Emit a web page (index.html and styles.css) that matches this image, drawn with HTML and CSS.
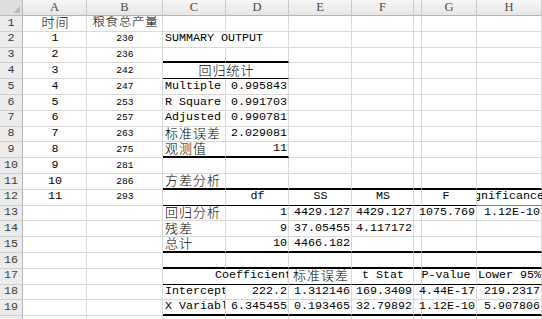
FILE: index.html
```html
<!DOCTYPE html>
<html lang="zh-CN">
<head>
<meta charset="utf-8">
<title>Regression Summary Output</title>
<link rel="stylesheet" href="styles.css">
</head>
<body>
<div class="sheet">
  <div class="row hdr">
    <div class="corner"><span class="tri"></span></div>
    <div class="ch">A</div><div class="ch">B</div><div class="ch">C</div><div class="ch">D</div><div class="ch">E</div><div class="ch">F</div><div class="ch"></div><div class="ch">G</div><div class="ch">H</div>
  </div>
  <div class="row">
    <div class="rh">1</div>
    <div class="c k m">时间</div><div class="c k m k13">粮食总产量</div>
    <div class="c"></div><div class="c"></div><div class="c"></div><div class="c"></div><div class="c"></div><div class="c"></div><div class="c"></div>
  </div>
  <div class="row">
    <div class="rh">2</div>
    <div class="c m">1</div><div class="c m sm">230</div>
    <div class="c ov nobr">SUMMARY OUTPUT</div><div class="c"></div><div class="c"></div><div class="c"></div><div class="c"></div><div class="c"></div><div class="c"></div>
  </div>
  <div class="row">
    <div class="rh">3</div>
    <div class="c m">2</div><div class="c m sm">236</div>
    <div class="c tb"></div><div class="c tb"></div><div class="c"></div><div class="c"></div><div class="c"></div><div class="c"></div><div class="c"></div>
  </div>
  <div class="row">
    <div class="rh">4</div>
    <div class="c m">3</div><div class="c m sm">242</div>
    <div class="c k m span2 bb">回归统计</div><div class="c"></div><div class="c"></div><div class="c"></div><div class="c"></div><div class="c"></div>
  </div>
  <div class="row">
    <div class="rh">5</div>
    <div class="c m">4</div><div class="c m sm">247</div>
    <div class="c">Multiple R</div><div class="c r">0.995843</div><div class="c"></div><div class="c"></div><div class="c"></div><div class="c"></div><div class="c"></div>
  </div>
  <div class="row">
    <div class="rh">6</div>
    <div class="c m">5</div><div class="c m sm">253</div>
    <div class="c">R Square</div><div class="c r">0.991703</div><div class="c"></div><div class="c"></div><div class="c"></div><div class="c"></div><div class="c"></div>
  </div>
  <div class="row">
    <div class="rh">7</div>
    <div class="c m">6</div><div class="c m sm">257</div>
    <div class="c">Adjusted R Square</div><div class="c r">0.990781</div><div class="c"></div><div class="c"></div><div class="c"></div><div class="c"></div><div class="c"></div>
  </div>
  <div class="row">
    <div class="rh">8</div>
    <div class="c m">7</div><div class="c m sm">263</div>
    <div class="c k">标准误差</div><div class="c r">2.029081</div><div class="c"></div><div class="c"></div><div class="c"></div><div class="c"></div><div class="c"></div>
  </div>
  <div class="row">
    <div class="rh">9</div>
    <div class="c m">8</div><div class="c m sm">275</div>
    <div class="c k tb">观测值</div><div class="c r tb">11</div><div class="c"></div><div class="c"></div><div class="c"></div><div class="c"></div><div class="c"></div>
  </div>
  <div class="row">
    <div class="rh">10</div>
    <div class="c m">9</div><div class="c m sm">281</div>
    <div class="c"></div><div class="c"></div><div class="c"></div><div class="c"></div><div class="c"></div><div class="c"></div><div class="c"></div>
  </div>
  <div class="row">
    <div class="rh">11</div>
    <div class="c m">10</div><div class="c m sm">286</div>
    <div class="c k tb">方差分析</div><div class="c tb"></div><div class="c tb"></div><div class="c tb"></div><div class="c tb"></div><div class="c tb"></div><div class="c tb"></div>
  </div>
  <div class="row">
    <div class="rh">12</div>
    <div class="c m">11</div><div class="c m sm">293</div>
    <div class="c bb"></div><div class="c m bb">df</div><div class="c m bb">SS</div><div class="c m bb">MS</div><div class="c bb"></div><div class="c m gc ov bb">F</div><div class="c m bb sig"><div class="sig-in">Significance F</div></div>
  </div>
  <div class="row">
    <div class="rh">13</div>
    <div class="c"></div><div class="c"></div>
    <div class="c k">回归分析</div><div class="c r">1</div><div class="c r">4429.127</div><div class="c r">4429.127</div><div class="c"></div><div class="c r ov">1075.769</div><div class="c r">1.12E-10</div>
  </div>
  <div class="row">
    <div class="rh">14</div>
    <div class="c"></div><div class="c"></div>
    <div class="c k">残差</div><div class="c r">9</div><div class="c r">37.05455</div><div class="c r">4.117172</div><div class="c"></div><div class="c"></div><div class="c"></div>
  </div>
  <div class="row">
    <div class="rh">15</div>
    <div class="c"></div><div class="c"></div>
    <div class="c k tb">总计</div><div class="c r tb">10</div><div class="c r tb">4466.182</div><div class="c tb"></div><div class="c tb"></div><div class="c tb"></div><div class="c tb"></div>
  </div>
  <div class="row">
    <div class="rh">16</div>
    <div class="c"></div><div class="c"></div>
    <div class="c tb"></div><div class="c tb"></div><div class="c tb"></div><div class="c tb"></div><div class="c tb"></div><div class="c tb"></div><div class="c tb"></div>
  </div>
  <div class="row">
    <div class="rh">17</div>
    <div class="c"></div><div class="c"></div>
    <div class="c span2 bb coef"><div class="coef-in">Coefficients</div></div><div class="c k m bb">标准误差</div><div class="c m bb">t Stat</div><div class="c bb"></div><div class="c m gc ov bb">P-value</div><div class="c m bb">Lower 95%</div>
  </div>
  <div class="row">
    <div class="rh">18</div>
    <div class="c"></div><div class="c"></div>
    <div class="c">Intercept</div><div class="c r">222.2</div><div class="c r">1.312146</div><div class="c r">169.3409</div><div class="c"></div><div class="c r ov">4.44E-17</div><div class="c r">219.2317</div>
  </div>
  <div class="row">
    <div class="rh">19</div>
    <div class="c"></div><div class="c"></div>
    <div class="c tb">X Variable 1</div><div class="c r tb">6.345455</div><div class="c r tb">0.193465</div><div class="c r tb">32.79892</div><div class="c tb"></div><div class="c r ov tb">1.12E-10</div><div class="c r tb">5.907806</div>
  </div>
  <div class="row">
    <div class="rh"></div>
    <div class="c"></div><div class="c"></div><div class="c"></div><div class="c"></div><div class="c"></div><div class="c"></div><div class="c"></div><div class="c"></div><div class="c"></div>
  </div>
</div>
</body>
</html>
```
FILE: styles.css
```css
* { box-sizing: border-box; }

html, body {
  margin: 0;
  padding: 0;
  background: #ffffff;
}

body {
  width: 542px;
  height: 319px;
  overflow: hidden;
  font-family: "Liberation Mono", "Noto Sans CJK SC", monospace;
  font-size: 11.67px;
  color: #000;
}

.sheet {
  width: 542px;
}

.row {
  display: grid;
  grid-template-columns: 23px 64px 76px 63px 63px 63px 62px 8px 55px 65px;
  height: 15.8px;
}

.row.hdr {
  height: 16px;
}

.corner {
  background: #dedede;
  border-right: 1px solid #b9b9b9;
  border-bottom: 1px solid #b9b9b9;
  display: flex;
  justify-content: flex-end;
  align-items: flex-end;
  padding: 0 2px 2px 0;
}

.tri {
  width: 0;
  height: 0;
  border-left: 7px solid transparent;
  border-bottom: 7px solid #bdbdbd;
}

.ch {
  background: linear-gradient(#f7f7f7, #e6e6e6);
  border-right: 1px solid #c9c9c9;
  border-bottom: 1px solid #b3b3b3;
  display: flex;
  align-items: center;
  justify-content: center;
  font-family: "Liberation Serif", serif;
  font-size: 12.5px;
  color: #4a4a4a;
  line-height: 1;
}

.rh {
  background: #ececec;
  border-right: 1px solid #b3b3b3;
  border-bottom: 1px solid #cfcfcf;
  display: flex;
  align-items: center;
  justify-content: center;
  font-family: "Liberation Mono", monospace;
  font-size: 11.67px;
  color: #3a3a3a;
  line-height: 1;
}

.c {
  border-right: 1px solid #d9d9d9;
  border-bottom: 1px solid #d9d9d9;
  display: flex;
  align-items: center;
  justify-content: flex-start;
  padding: 0 1px 0 2px;
  white-space: nowrap;
  overflow: hidden;
  line-height: 1;
}

.c.r { justify-content: flex-end; overflow: visible; }
.c.m { justify-content: center; }
.c.ov { overflow: visible; }
.c.nobr { border-right-color: transparent; }
.c.gc { padding-right: 8px; }

.c.k {
  font-family: "Noto Sans CJK SC", sans-serif;
  font-size: 13px;
  letter-spacing: 1px;
  font-weight: 300;
  line-height: 13px;
  padding-bottom: 3px;
}

.c.k.m { padding-left: 3px; }

.c.k13 { font-size: 12.4px; letter-spacing: 0.8px; }

.c.sm {
  font-size: 9.6px;
}

.c.span2 { grid-column: span 2; }

.c.tb { border-bottom: 2px solid #000; }
.c.bb { border-bottom: 1px solid #000; }

.coef {
  padding: 0;
}

.coef-in {
  margin-left: 63px;
  width: 62px;
  display: flex;
  justify-content: center;
  white-space: nowrap;
}

.sig {
  overflow: visible;
  padding: 0;
  clip-path: inset(0 -120px 0 0);
}

.sig-in {
  width: 64px;
  display: flex;
  justify-content: center;
  white-space: nowrap;
}
```
